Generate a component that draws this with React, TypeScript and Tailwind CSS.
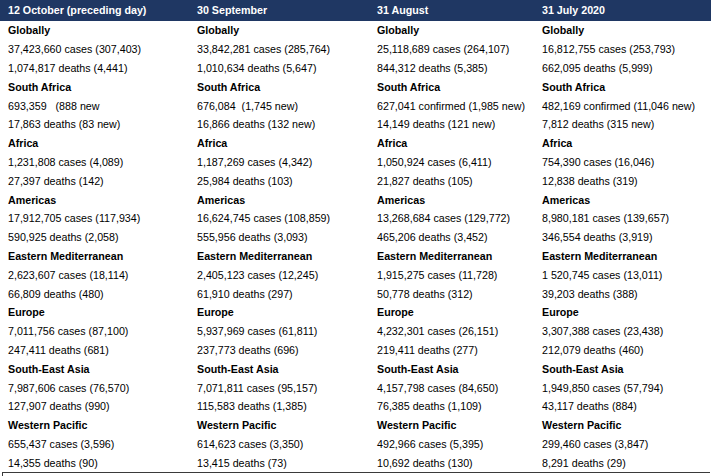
const headers = ["12 October (preceding day)", "30 September", "31 August", "31 July 2020"];

type Row = { bold?: boolean; cells: string[] };

const rows: Row[] = [
  { bold: true, cells: ["Globally", "Globally", "Globally", "Globally"] },
  { cells: ["37,423,660 cases (307,403)", "33,842,281 cases (285,764)", "25,118,689 cases (264,107)", "16,812,755 cases (253,793)"] },
  { cells: ["1,074,817 deaths (4,441)", "1,010,634 deaths (5,647)", "844,312 deaths (5,385)", "662,095 deaths (5,999)"] },
  { bold: true, cells: ["South Africa", "South Africa", "South Africa", "South Africa"] },
  { cells: ["693,359   (888 new", "676,084  (1,745 new)", "627,041 confirmed (1,985 new)", "482,169 confirmed (11,046 new)"] },
  { cells: ["17,863 deaths (83 new)", "16,866 deaths (132 new)", "14,149 deaths (121 new)", "7,812 deaths (315 new)"] },
  { bold: true, cells: ["Africa", "Africa", "Africa", "Africa"] },
  { cells: ["1,231,808 cases (4,089)", "1,187,269 cases (4,342)", "1,050,924 cases (6,411)", "754,390 cases (16,046)"] },
  { cells: ["27,397 deaths (142)", "25,984 deaths (103)", "21,827 deaths (105)", "12,838 deaths (319)"] },
  { bold: true, cells: ["Americas", "Americas", "Americas", "Americas"] },
  { cells: ["17,912,705 cases (117,934)", "16,624,745 cases (108,859)", "13,268,684 cases (129,772)", "8,980,181 cases (139,657)"] },
  { cells: ["590,925 deaths (2,058)", "555,956 deaths (3,093)", "465,206 deaths (3,452)", "346,554 deaths (3,919)"] },
  { bold: true, cells: ["Eastern Mediterranean", "Eastern Mediterranean", "Eastern Mediterranean", "Eastern Mediterranean"] },
  { cells: ["2,623,607 cases (18,114)", "2,405,123 cases (12,245)", "1,915,275 cases (11,728)", "1 520,745 cases (13,011)"] },
  { cells: ["66,809 deaths (480)", "61,910 deaths (297)", "50,778 deaths (312)", "39,203 deaths (388)"] },
  { bold: true, cells: ["Europe", "Europe", "Europe", "Europe"] },
  { cells: ["7,011,756 cases (87,100)", "5,937,969 cases (61,811)", "4,232,301 cases (26,151)", "3,307,388 cases (23,438)"] },
  { cells: ["247,411 deaths (681)", "237,773 deaths (696)", "219,411 deaths (277)", "212,079 deaths (460)"] },
  { bold: true, cells: ["South-East Asia", "South-East Asia", "South-East Asia", "South-East Asia"] },
  { cells: ["7,987,606 cases (76,570)", "7,071,811 cases (95,157)", "4,157,798 cases (84,650)", "1,949,850 cases (57,794)"] },
  { cells: ["127,907 deaths (990)", "115,583 deaths (1,385)", "76,385 deaths (1,109)", "43,117 deaths (884)"] },
  { bold: true, cells: ["Western Pacific", "Western Pacific", "Western Pacific", "Western Pacific"] },
  { cells: ["655,437 cases (3,596)", "614,623 cases (3,350)", "492,966 cases (5,395)", "299,460 cases (3,847)"] },
  { cells: ["14,355 deaths (90)", "13,415 deaths (73)", "10,692 deaths (130)", "8,291 deaths (29)"] },
];

const gridCols = "grid grid-cols-[189px_180px_165px_163px]";

export default function App() {
  return (
    <div className="w-[711px] h-[476px] overflow-hidden bg-white text-black font-['Liberation_Sans',Arial,sans-serif] text-[10.7px]">
      {/* Header */}
      <div className={`${gridCols} h-[21px] bg-[#1f3763] text-white font-bold`}>
        {headers.map((h) => (
          <div key={h} className="flex items-center pl-[8px] whitespace-pre">
            {h}
          </div>
        ))}
      </div>

      {/* Body */}
      {rows.map((r, i) => (
        <div key={i} className={`${gridCols} h-[18.8px] ${r.bold ? "font-bold" : ""}`}>
          {r.cells.map((c, j) => (
            <div key={j} className="flex items-center pl-[8px] whitespace-pre">
              {c}
            </div>
          ))}
        </div>
      ))}

      {/* Next box edge */}
      <div className="ml-[2px] w-[708px] h-[10px] border-t border-l border-[#3a3a3a]" />
    </div>
  );
}
